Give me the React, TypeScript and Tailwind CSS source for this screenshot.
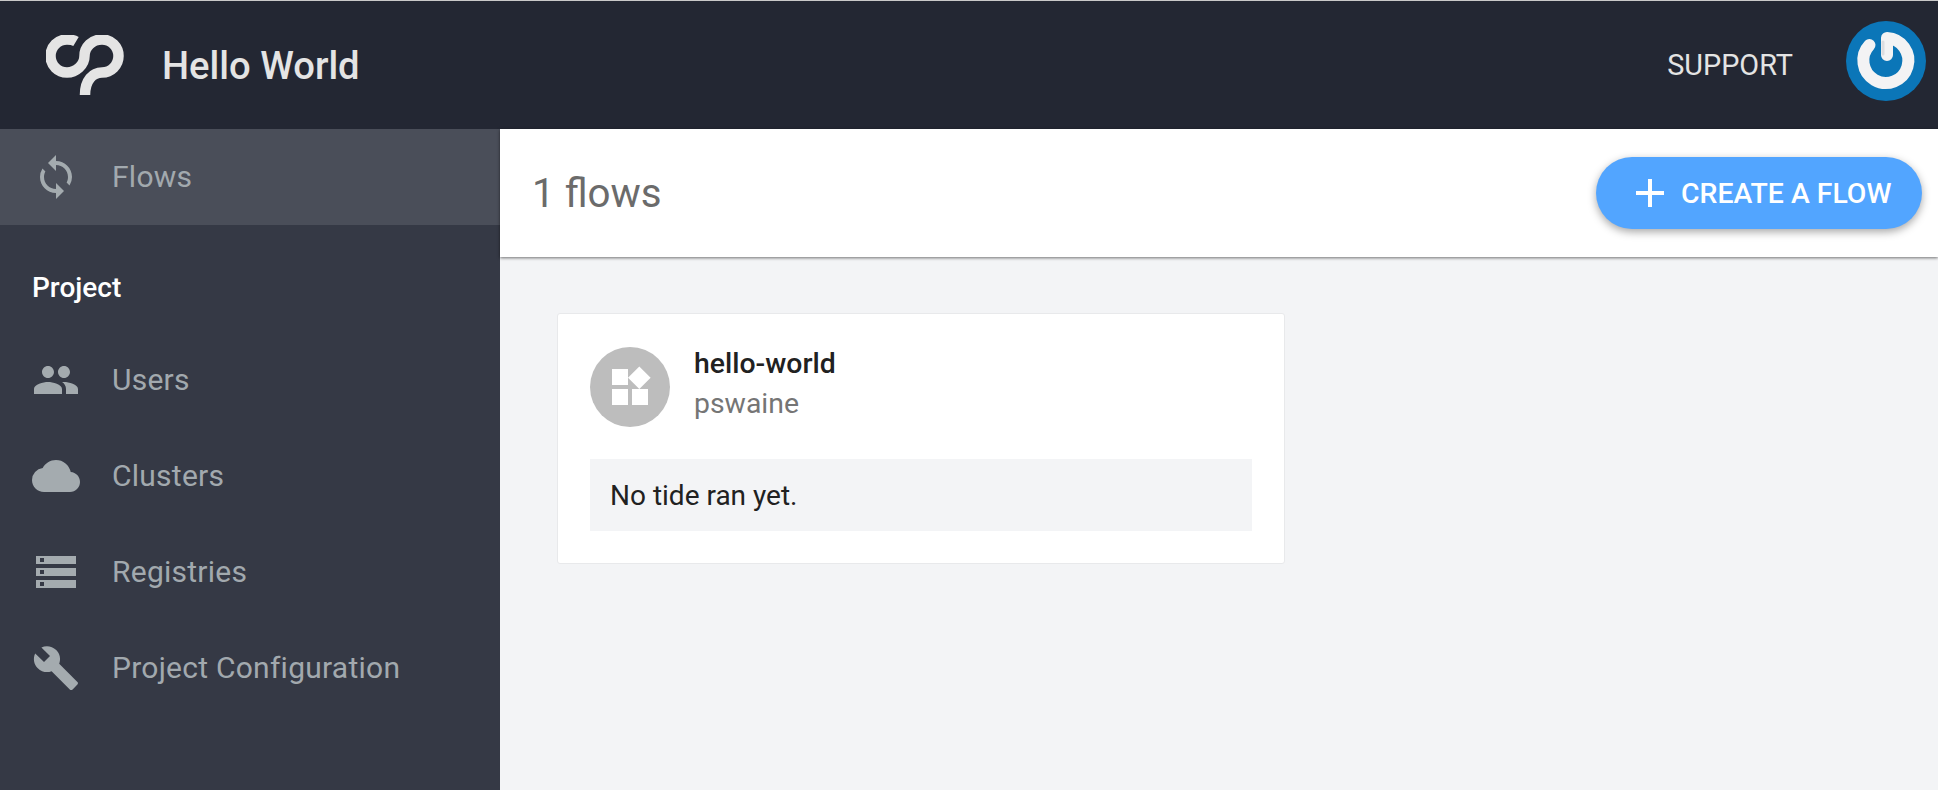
import { MdAdd, MdBuild, MdCloud, MdPeople, MdStorage, MdSync, MdWidgets } from 'react-icons/md'

const projectLinks = [
  { label: 'Users', icon: MdPeople },
  { label: 'Clusters', icon: MdCloud },
  { label: 'Registries', icon: MdStorage },
  { label: 'Project Configuration', icon: MdBuild },
]

function Logo() {
  return (
    <svg viewBox="46 37 78 61" className="w-[78px] h-[61px]" fill="none" stroke="#e4e4e4" strokeWidth="10.5">
      <path d="M76 43.5C73.5 42 70.5 41.5 67 41.5A16.5 16.5 0 0 0 67 74.5C76 74.5 84.5 67 84.5 58C84.5 49 92 41.5 102 41.5A16.5 16.5 0 0 1 102 74.5C93 74.5 85 82 85 97" />
    </svg>
  )
}

function Avatar() {
  return (
    <svg viewBox="0 0 80 80" className="w-20 h-20">
      <circle cx="40" cy="40" r="40" fill="#0b76b8" />
      <path
        d="M23.5 24A22.5 22.5 0 1 0 41 17V34"
        fill="none"
        stroke="#f3f3f4"
        strokeWidth="12"
        strokeLinecap="round"
        strokeLinejoin="round"
      />
      {/* grey shading on the left of the stem */}
      <path d="M37 21V33" fill="none" stroke="#dcdde0" strokeWidth="3" strokeLinecap="round" />
    </svg>
  )
}

export default function App() {
  return (
    <div className="flex flex-col h-[790px] overflow-hidden font-['Roboto',sans-serif] bg-[#f3f4f6]">
      {/* Header */}
      <header className="flex items-center justify-between h-[129px] shrink-0 bg-[#232733] border-t border-[#c9c9c9] pl-[46px] pr-3">
        <div className="flex items-center">
          <Logo />
          <span className="ml-[38px] mt-[3px] text-[38.2px] font-medium text-[#e4e4e4]">Hello World</span>
        </div>
        <div className="flex items-center">
          <span className="mt-[2px] text-[28.8px] text-[#e4e4e4]">SUPPORT</span>
          <div className="ml-[53px] mb-2">
            <Avatar />
          </div>
        </div>
      </header>

      <div className="flex flex-1 min-h-0">
        {/* Sidebar */}
        <aside className="w-[500px] shrink-0 bg-[#353945] text-[#a2a9ae]">
          <div className="flex items-center h-24 bg-[#4a4e59] pl-8">
            <MdSync className="w-12 h-12 text-[#a4abaf]" />
            <span className="ml-8 pb-[2px] text-[30px] tracking-[0.25px]">Flows</span>
          </div>
          <div className="pl-8 pt-[41px] pb-[23px] text-[28px] leading-[43px] font-medium text-white">Project</div>
          {projectLinks.map((link) => (
            <div key={link.label} className="flex items-center h-24 pl-8">
              <link.icon className="w-12 h-12 text-[#a4abaf]" />
              <span className="ml-8 pb-[2px] text-[30px] tracking-[0.25px]">{link.label}</span>
            </div>
          ))}
        </aside>

        {/* Main */}
        <main className="flex-1 min-w-0">
          <div className="flex items-center justify-between h-[128px] bg-white pl-[32px] pr-4 shadow-[0_1px_3px_rgba(0,0,0,0.55)]">
            <h1 className="mt-[2px] text-[40.3px] text-[#6b6b6b]">1 flows</h1>
            <button className="flex items-center h-[72px] w-[326px] rounded-full bg-[#52a5ff] pl-[30px] text-white text-[28.4px] font-medium shadow-[0_3px_8px_rgba(0,0,0,0.35)]">
              <MdAdd className="w-12 h-12" />
              <span className="ml-[7px] mt-[2px]">CREATE A FLOW</span>
            </button>
          </div>

          <div className="pt-[56px] pl-[57px]">
            <div className="w-[728px] h-[251px] bg-white rounded-[3px] border border-[#e8e9eb] px-8 pt-[33px]">
              <div className="flex items-center">
                <div className="flex items-center justify-center w-20 h-20 rounded-full bg-[#bdbdbd]">
                  <MdWidgets className="w-12 h-12 text-white" />
                </div>
                <div className="ml-6 -mt-[6px]">
                  <div className="text-[28.4px] leading-[40px] font-medium text-[#212121]">hello-world</div>
                  <div className="text-[28.4px] leading-[40px] text-[#757575]">pswaine</div>
                </div>
              </div>
              <div className="flex items-center h-[72px] mt-8 px-5 bg-[#f3f4f6] text-[28px] text-[#212121]">
                <span className="mt-[1px]">No tide ran yet.</span>
              </div>
            </div>
          </div>
        </main>
      </div>
    </div>
  )
}
